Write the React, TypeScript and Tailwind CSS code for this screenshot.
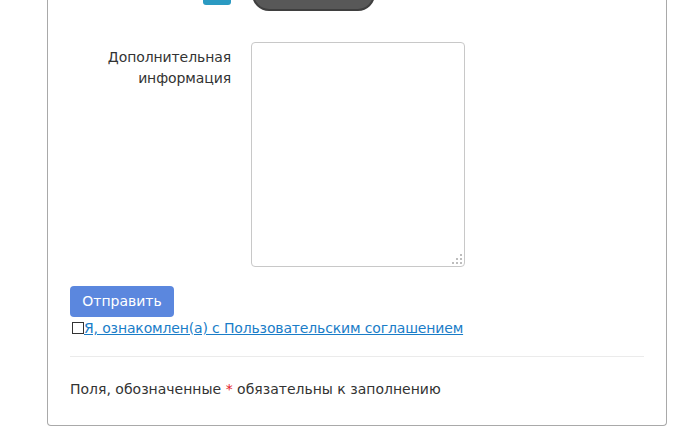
import React from "react";

export default function App() {
  const dots = [
    [8, 0],
    [4, 4], [8, 4],
    [0, 8], [4, 8], [8, 8],
  ];
  return (
    <div className="w-[683px] h-[438px] overflow-hidden bg-white" style={{ fontFamily: '"DejaVu Sans", Verdana, sans-serif' }}>
      <div className="ml-[47px] w-[620px] border border-t-0 border-[#a9a9a9] rounded-b-[4px] pl-[22px] pr-[22px] pb-[26px] text-[14px] text-[#333]">
        {/* cropped previous row */}
        <div className="h-[11px] overflow-hidden flex items-end">
          <div className="w-[161px] h-full flex items-end justify-end">
            <div className="w-[28px] h-[30px] mb-[6px] rounded-[3px] bg-[#2b9ac2]" />
          </div>
          <div className="ml-[21px] w-[123px] h-[34px] rounded-full bg-[#585858] border-2 border-[#3f3f3f]" />
        </div>
        {/* textarea row */}
        <div className="flex mt-[31px]">
          <div className="w-[161px] text-right pt-[5px] leading-[21px] tracking-[-0.1px]">
            Дополнительная<br />информация
          </div>
          <div className="relative ml-[20px] w-[214px] h-[225px]">
            <textarea className="block w-full h-full border border-[#c8c8c8] rounded-[4px] resize-none outline-none" />
            <div className="absolute right-[3px] bottom-[3px] w-[10px] h-[10px]">
              {dots.map(([x, y], i) => (
                <span
                  key={i}
                  className="absolute w-[2px] h-[2px] bg-[#bdbdbd]"
                  style={{ left: x, top: y }}
                />
              ))}
            </div>
          </div>
        </div>
        <button className="mt-[19px] w-[104px] h-[31px] rounded-[4px] bg-[#5b87de] text-white text-[14px]">
          Отправить
        </button>
        <div className="flex items-center h-[18px] mt-[2px]">
          <span className="ml-[2px] w-[12px] h-[12px] border border-[#333] border-r-dotted border-b-dotted bg-white inline-block" />
          <a href="#" className="text-[#1a7dc8] underline leading-[18px] tracking-[-0.15px]">Я, ознакомлен(а) с Пользовательским соглашением</a>
        </div>
        <div className="mt-[19px] border-t border-[#ebebeb]" />
        <div className="mt-[22px] leading-[20px]">
          Поля, обозначенные <span className="text-[#e5202a]">*</span> обязательны к заполнению
        </div>
      </div>
    </div>
  );
}
